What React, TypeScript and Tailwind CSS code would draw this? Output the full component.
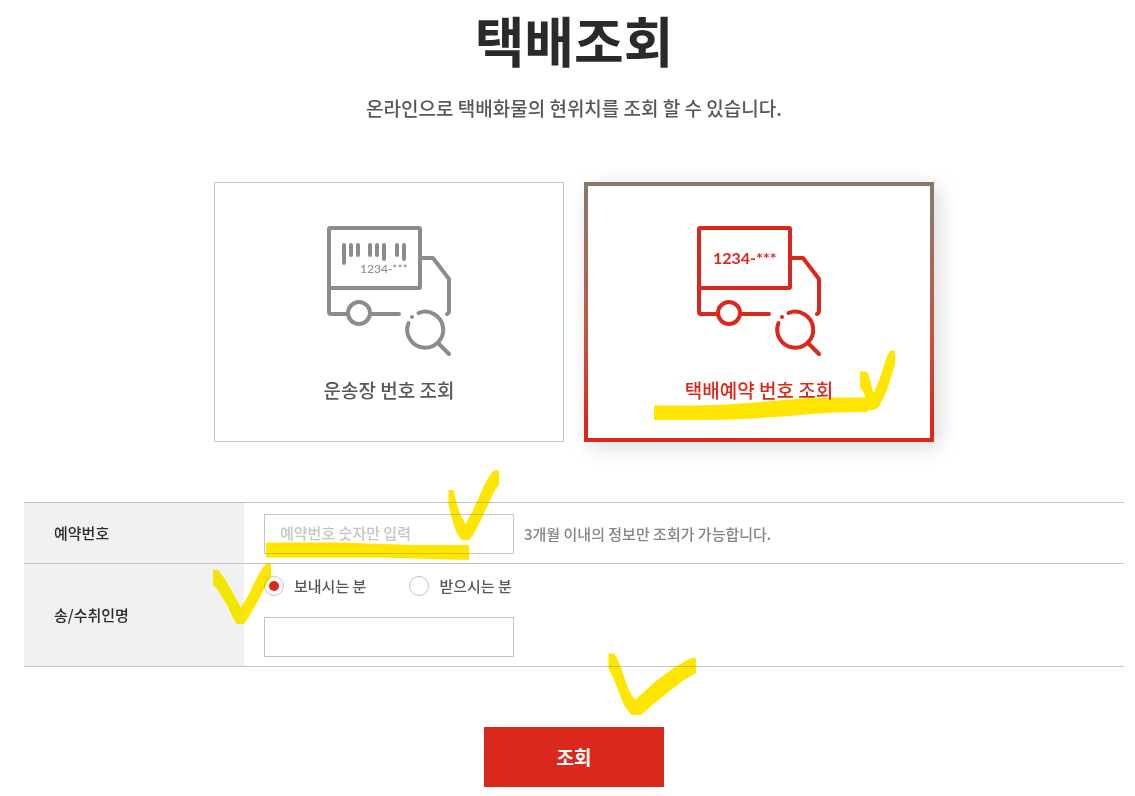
import { useState } from 'react';

const tabs = [
  { id: 'invoice', label: '운송장 번호 조회' },
  { id: 'reserve', label: '택배예약 번호 조회' },
];

const people = [
  { id: 'sender', label: '보내시는 분' },
  { id: 'receiver', label: '받으시는 분' },
];

const TruckIcon = ({ barcode }: { barcode: boolean }) => (
  <svg
    width="124"
    height="130"
    viewBox="0 0 124 130"
    fill="none"
    stroke="currentColor"
    strokeWidth="4"
    strokeLinecap="round"
    strokeLinejoin="round"
    aria-hidden="true"
  >
    <rect x="2" y="2" width="91" height="60" rx="1" />
    <path d="M2 62v24q0 2 2 2h16M45 88h27" />
    <circle cx="32" cy="87" r="11" />
    <path d="M95 32h11l16 21v32q0 2-2 3" />
    <path d="M81.500 97a18 18 0 1 0 10-10" />
    <path d="M111 117l11 11" />
    <circle cx="85" cy="91" r="2" fill="currentColor" stroke="none" />
    {barcode ? (
      <>
        <path d="M17 19v18M24 19v10M31 19v10M43 19v10M50 19v10M57 19v14M70 19v10M77 19v14" />
        <text x="33" y="47" fontSize="12" fontWeight="500" fill="currentColor" stroke="none">
          1234-***
        </text>
      </>
    ) : (
      <text x="16" y="38" fontSize="16" fontWeight="700" fill="currentColor" stroke="none">
        1234-***
      </text>
    )}
  </svg>
);

// highlighter strokes
const marks = {
  tab: {
    box: '650 348 250 76',
    d: 'M654 405.500H695C760 404 790 397.500 840 397.500H865L864 393L860 387V371.500H867L869 376L873.500 393.500L880 378L885 362L888 354L891 350.500H895V365L893 371L887 390L880 405L876.500 409L873 410H868V412C810 411 780 420 690 420H654Z',
  },
  field: {
    box: '264 468 240 94',
    d: 'M448.500 490H453.500L456 501L460 514L465.500 524L473 510L485 483.500L491 473.500L494 470.500H499V485L495 490L487 507L475 532L469 540H461.500L458 535L454 526L448.500 505ZM266 542.500H340L413 545H469V560L380 557.500H266Z',
  },
  person: {
    box: '212 562 60 63',
    d: 'M213 570H218L225 579L241 607.500L250 592L258 575L264 565.500L267 563.500H271V577L268 581L260 597L250 615L244 624H237L234 620L227 605L217 589L213 585Z',
  },
  submit: {
    box: '606 651 92 66',
    d: 'M608.500 653.500H614L616 656L620 665L628 688L632 696L635.500 699.500L656 681L675 667L691 658H696V673L684 680L667 693L650 707L641 715H632L628 711L623 703L615 682L611 673L608.500 669Z',
  },
};

const Mark = ({ name, className }: { name: keyof typeof marks; className: string }) => (
  <svg
    viewBox={marks[name].box}
    className={`absolute pointer-events-none mix-blend-darken ${className}`}
    fill="#ffe600"
    aria-hidden="true"
  >
    <path d={marks[name].d} />
  </svg>
);

export default function App() {
  const [tab, setTab] = useState('reserve');
  const [person, setPerson] = useState('sender');

  return (
    <main className="bg-white pt-[6px] pr-[11px] pb-2 pl-6 font-['Noto_Sans_CJK_KR',sans-serif] font-medium text-[#55575a]">
      <header className="text-center">
        <h1 className="text-[54px] leading-[68px] font-bold text-[#2a2a2a]">택배조회</h1>
        <p className="mt-[18px] text-[19px] leading-8">온라인으로 택배화물의 현위치를 조회 할 수 있습니다.</p>
      </header>

      <div className="mt-[58px] flex justify-center gap-5">
        {tabs.map((item) => {
          const active = tab === item.id;
          return (
            <button
              key={item.id}
              type="button"
              aria-pressed={active}
              onClick={() => setTab(item.id)}
              className={`relative h-[260px] w-[350px] text-[19px] leading-8 ${
                active
                  ? 'bg-linear-to-b from-[#8a776c] from-10% to-[#da291c] to-90% p-1 text-[#da291c] shadow-[5px_5px_20px_rgba(0,0,0,0.15)]'
                  : 'bg-[#c4c4c4] p-px text-[#55575a]'
              }`}
            >
              <span className="flex h-full flex-col items-center justify-center gap-[18px] bg-white pt-2">
                <span className={active ? 'font-[Lato,sans-serif]' : 'font-[Lato,sans-serif] text-[#8a8d8f]'}>
                  <TruckIcon barcode={item.id === 'invoice'} />
                </span>
                <span>{item.label}</span>
              </span>
              {item.id === 'reserve' && <Mark name="tab" className="top-[166px] left-[66px] h-[76px] w-[250px]" />}
            </button>
          );
        })}
      </div>

      <form onSubmit={(e) => e.preventDefault()}>
        <table className="mt-[60px] w-full border-separate border-spacing-0 border-t border-[#c4c4c4] text-[15px] leading-6">
          <tbody>
            <tr>
              <th scope="row" className="w-[220px] border-b border-[#c4c4c4] bg-[#f1f1f1] px-[30px] text-left font-medium text-[#2a2a2a]">
                <label htmlFor="reserve-no">예약번호</label>
              </th>
              <td className="border-b border-[#c4c4c4] px-5 pt-[11px] pb-[9px]">
                <div className="relative flex items-center gap-[10px]">
                  <input
                    id="reserve-no"
                    type="text"
                    inputMode="numeric"
                    placeholder="예약번호 숫자만 입력"
                    className="h-10 w-[250px] border border-[#c4c4c4] px-[15px] pb-1 outline-none placeholder:text-[#c4c4c4]"
                  />
                  <span className="text-[#838689]">3개월 이내의 정보만 조회가 가능합니다.</span>
                  <Mark name="field" className="-top-[46px] left-0 h-[94px] w-[240px]" />
                </div>
              </td>
            </tr>
            <tr>
              <th scope="row" className="border-b border-[#c4c4c4] bg-[#f1f1f1] px-[30px] text-left font-medium text-[#2a2a2a]">
                <label htmlFor="person-name">송/수취인명</label>
              </th>
              <td className="border-b border-[#c4c4c4] px-5 pt-[10px] pb-[9px]">
                <div className="relative flex gap-[43px]">
                  {people.map((item) => (
                    <label key={item.id} className="flex items-center gap-[10px]">
                      <input
                        type="radio"
                        name="person"
                        checked={person === item.id}
                        onChange={() => setPerson(item.id)}
                        className="grid size-5 appearance-none place-items-center rounded-full border border-[#c4c4c4] bg-white before:size-[10px] before:rounded-full checked:before:bg-[#da291c]"
                      />
                      {item.label}
                    </label>
                  ))}
                  <Mark name="person" className="-top-3 -left-[52px] h-[63px] w-[60px]" />
                </div>
                <input
                  id="person-name"
                  type="text"
                  className="mt-[19px] block h-10 w-[250px] border border-[#c4c4c4] px-[15px] pb-1 outline-none"
                />
              </td>
            </tr>
          </tbody>
        </table>

        <div className="mt-[60px] flex justify-center">
          <div className="relative">
            <button type="submit" className="h-[60px] w-[180px] bg-[#da291c] text-[19px] font-bold text-white">
              조회
            </button>
            <Mark name="submit" className="-top-[76px] left-[122px] h-[66px] w-[92px]" />
          </div>
        </div>
      </form>
    </main>
  );
}
